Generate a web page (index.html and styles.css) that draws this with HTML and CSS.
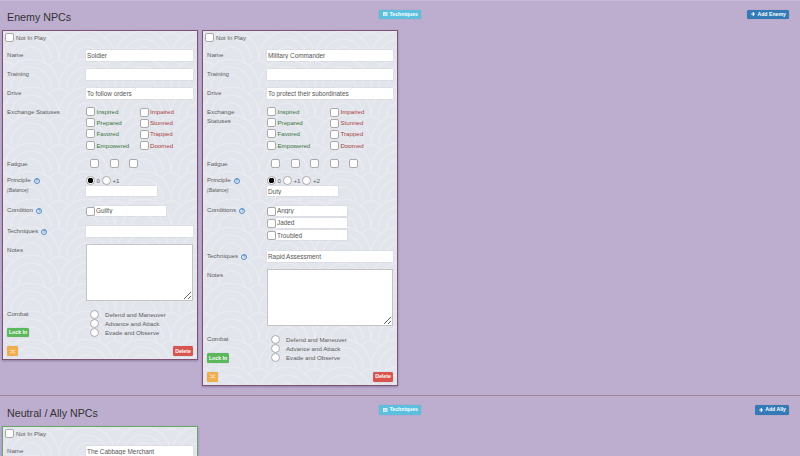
FILE: index.html
```html
<!DOCTYPE html>
<html lang="en">
<head>
<meta charset="utf-8">
<title>NPCs</title>
<link rel="stylesheet" href="styles.css">
</head>
<body>
<section class="band band-enemy">
  <header class="band-head">
    <h2 class="title">Enemy NPCs</h2>
    <a class="btn btn-info"><svg class="ico" viewBox="0 0 10 8"><path fill="#fff" d="M0 0h10v8H0z"/><path stroke="#5bc0de" stroke-width=".7" d="M0 2.5h10M0 5.2h10M3.3 2.5V8M6.7 2.5V8"/></svg>Techniques</a>
    <a class="btn btn-primary btn-right"><svg class="ico" viewBox="0 0 8 8"><path fill="#fff" d="M3 0h2v3h3v2H5v3H3V5H0V3h3z"/></svg>Add Enemy</a>
  </header>
  <div class="cards">
    <article class="card card-enemy">
      <label class="row-check"><input class="cb" type="checkbox">Not In Play</label>
      <div class="row"><span class="lab">Name</span><input class="txt" value="Soldier"></div>
      <div class="row"><span class="lab">Training</span><input class="txt"></div>
      <div class="row"><span class="lab">Drive</span><input class="txt" value="To follow orders"></div>
      <div class="row row-status"><span class="lab">Exchange Statuses</span>
        <div class="statuses">
          <label class="good"><input class="cb" type="checkbox">Inspired</label><label class="bad"><input class="cb" type="checkbox">Impaired</label>
          <label class="good"><input class="cb" type="checkbox">Prepared</label><label class="bad"><input class="cb" type="checkbox">Stunned</label>
          <label class="good"><input class="cb" type="checkbox">Favored</label><label class="bad"><input class="cb" type="checkbox">Trapped</label>
          <label class="good"><input class="cb" type="checkbox">Empowered</label><label class="bad"><input class="cb" type="checkbox">Doomed</label>
        </div>
      </div>
      <div class="row row-fatigue"><span class="lab">Fatigue</span>
        <div class="fatigue"><input class="cb" type="checkbox"><input class="cb" type="checkbox"><input class="cb" type="checkbox"></div>
      </div>
      <div class="row row-principle"><div class="lab">Principle <span class="help">?</span><small class="sub">(Balance)</small></div>
        <div>
          <div class="radios"><input class="rb" type="radio" name="p1" checked><span>0</span><input class="rb" type="radio" name="p1"><span>+1</span></div>
          <input class="txt txt-short">
        </div>
      </div>
      <div class="row row-cond"><span class="lab">Condition <span class="help">?</span></span>
        <div class="conds"><div class="cond"><input class="cb" type="checkbox"><input class="txt txt-short" value="Guilty"></div></div>
      </div>
      <div class="row"><span class="lab">Techniques <span class="help">?</span></span><input class="txt" value=""></div>
      <div class="row row-notes"><span class="lab">Notes</span><textarea class="notes"></textarea></div>
      <div class="row row-combat"><div class="lab">Combat<a class="btn btn-success btn-lock">Lock In</a></div>
        <div class="combat">
          <label><input class="rb" type="radio" name="c1">Defend and Maneuver</label>
          <label><input class="rb" type="radio" name="c1">Advance and Attack</label>
          <label><input class="rb" type="radio" name="c1">Evade and Observe</label>
        </div>
      </div>
      <footer class="foot"><a class="btn btn-warn"><svg class="ico-x" viewBox="0 0 10 8"><path fill="none" stroke="#fff" d="M0 1.5h2.5l4 5H9M0 6.5h2.5l4-5H9"/></svg></a><a class="btn btn-danger">Delete</a></footer>
    </article>

    <article class="card card-enemy card-narrow">
      <label class="row-check"><input class="cb" type="checkbox">Not In Play</label>
      <div class="row"><span class="lab">Name</span><input class="txt" value="Military Commander"></div>
      <div class="row"><span class="lab">Training</span><input class="txt"></div>
      <div class="row"><span class="lab">Drive</span><input class="txt" value="To protect their subordinates"></div>
      <div class="row row-status"><span class="lab lab-status">Exchange Statuses</span>
        <div class="statuses">
          <label class="good"><input class="cb" type="checkbox">Inspired</label><label class="bad"><input class="cb" type="checkbox">Impaired</label>
          <label class="good"><input class="cb" type="checkbox">Prepared</label><label class="bad"><input class="cb" type="checkbox">Stunned</label>
          <label class="good"><input class="cb" type="checkbox">Favored</label><label class="bad"><input class="cb" type="checkbox">Trapped</label>
          <label class="good"><input class="cb" type="checkbox">Empowered</label><label class="bad"><input class="cb" type="checkbox">Doomed</label>
        </div>
      </div>
      <div class="row row-fatigue"><span class="lab">Fatigue</span>
        <div class="fatigue"><input class="cb" type="checkbox"><input class="cb" type="checkbox"><input class="cb" type="checkbox"><input class="cb" type="checkbox"><input class="cb" type="checkbox"></div>
      </div>
      <div class="row row-principle"><div class="lab">Principle <span class="help">?</span><small class="sub">(Balance)</small></div>
        <div>
          <div class="radios"><input class="rb" type="radio" name="p2" checked><span>0</span><input class="rb" type="radio" name="p2"><span>+1</span><input class="rb" type="radio" name="p2"><span>+2</span></div>
          <input class="txt txt-short" value="Duty">
        </div>
      </div>
      <div class="row row-cond"><span class="lab">Conditions <span class="help">?</span></span>
        <div class="conds">
          <div class="cond"><input class="cb" type="checkbox"><input class="txt txt-short" value="Angry"></div>
          <div class="cond"><input class="cb" type="checkbox"><input class="txt txt-short" value="Jaded"></div>
          <div class="cond"><input class="cb" type="checkbox"><input class="txt txt-short" value="Troubled"></div>
        </div>
      </div>
      <div class="row"><span class="lab">Techniques <span class="help">?</span></span><input class="txt" value="Rapid Assessment"></div>
      <div class="row row-notes"><span class="lab">Notes</span><textarea class="notes"></textarea></div>
      <div class="row row-combat"><div class="lab">Combat<a class="btn btn-success btn-lock">Lock In</a></div>
        <div class="combat">
          <label><input class="rb" type="radio" name="c2">Defend and Maneuver</label>
          <label><input class="rb" type="radio" name="c2">Advance and Attack</label>
          <label><input class="rb" type="radio" name="c2">Evade and Observe</label>
        </div>
      </div>
      <footer class="foot"><a class="btn btn-warn"><svg class="ico-x" viewBox="0 0 10 8"><path fill="none" stroke="#fff" d="M0 1.5h2.5l4 5H9M0 6.5h2.5l4-5H9"/></svg></a><a class="btn btn-danger">Delete</a></footer>
    </article>
  </div>
</section>

<section class="band band-ally">
  <header class="band-head">
    <h2 class="title">Neutral / Ally NPCs</h2>
    <a class="btn btn-info"><svg class="ico" viewBox="0 0 10 8"><path fill="#fff" d="M0 0h10v8H0z"/><path stroke="#5bc0de" stroke-width=".7" d="M0 2.5h10M0 5.2h10M3.3 2.5V8M6.7 2.5V8"/></svg>Techniques</a>
    <a class="btn btn-primary btn-right"><svg class="ico" viewBox="0 0 8 8"><path fill="#fff" d="M3 0h2v3h3v2H5v3H3V5H0V3h3z"/></svg>Add Ally</a>
  </header>
  <div class="cards">
    <article class="card card-ally">
      <label class="row-check"><input class="cb" type="checkbox">Not In Play</label>
      <div class="row"><span class="lab">Name</span><input class="txt" value="The Cabbage Merchant"></div>
    </article>
  </div>
</section>
</body>
</html>
```
FILE: styles.css
```css
* { box-sizing: border-box; }
html, body { height: 456px; overflow: hidden; }
body {
  margin: 0;
  background: #bdaed0;
  box-shadow: inset 0 1px #c6b9d6;
  font-family: "Liberation Sans", Arial, sans-serif;
  font-size: 6.15px;
  line-height: 9px;
  color: #5c5c5c;
}
.band-enemy { height: 396px; border-bottom: 1px solid #a0839f; }
.band-head {
  display: grid;
  grid-template-columns: 1fr auto 1fr;
  align-items: start;
  height: 30px;
  padding: 9.5px 7px 0;
}
.band-ally .band-head { padding-top: 9px; }
.title {
  margin: 0;
  font-size: 10.7px;
  line-height: 14px;
  font-weight: 400;
  color: #333;
}
.band-enemy .title { margin-top: 0.5px; }
.band-ally .title { margin-top: 1px; }
.btn {
  display: inline-flex;
  align-items: center;
  justify-content: center;
  height: 9.5px;
  padding: 0 3px;
  border-radius: 1.5px;
  color: #fff;
  font-size: 5.2px;
  font-weight: 700;
  line-height: 9px;
  box-shadow: 0 0 1px rgba(60, 60, 80, .35);
}
.btn-right { justify-self: end; margin-right: 4px; }
.ico { width: 4.5px; height: 4px; margin: 0 2px 0 1px; }
.ico-x { width: 6px; height: 5px; }
.btn-info { background: #5bc0de; }
.btn-primary { background: #337ab7; }
.btn-success { background: #5cb85c; }
.btn-warn { background: #f0ad4e; width: 11px; height: 10px; padding: 0; }
.btn-danger { background: #d9534f; height: 10px; width: 20px; padding: 0; }

.cards { display: flex; align-items: flex-start; gap: 4px; padding-left: 2px; }
.card {
  --lab: 79px;
  width: 196px;
  padding: 1px 4px 3px 4px;
  border: 1px solid #7f5273;
  box-shadow: 0 1px 2px rgba(60, 40, 80, .35);
  background-color: #e2e5ec;
  background-image: url("data:image/svg+xml,%3Csvg xmlns='http://www.w3.org/2000/svg' xmlns:xlink='http://www.w3.org/1999/xlink' width='56' height='28'%3E%3Cdefs%3E%3Cg id='c' fill='%23e2e5ec' stroke='%23e9ebf0' stroke-width='1.6'%3E%3Ccircle r='28'/%3E%3Ccircle r='20' fill='none'/%3E%3Ccircle r='12' fill='none'/%3E%3C/g%3E%3C/defs%3E%3Cuse xlink:href='%23c' x='28' y='0'/%3E%3Cuse xlink:href='%23c' x='0' y='14'/%3E%3Cuse xlink:href='%23c' x='56' y='14'/%3E%3Cuse xlink:href='%23c' x='28' y='28'/%3E%3C/svg%3E");
}
.card-narrow { --lab: 60px; }
.card-ally { border-color: #6aa56a; height: 60px; }

.row-check {
  display: flex;
  align-items: center;
  gap: 2px;
  height: 10px;
  margin: 0 0 8px -2px;
}
.row {
  display: grid;
  grid-template-columns: var(--lab) 1fr;
  margin-bottom: 8px;
}
.lab { display: block; line-height: 9px; }
.lab-status { padding-right: 12px; }
.sub { display: block; font-size: 5px; font-style: italic; margin-top: 1.5px; }
.help {
  display: inline-block;
  width: 6px;
  height: 6px;
  margin-left: 1.5px;
  border: 1px solid #4f8fcf;
  border-radius: 50%;
  color: #337ab7;
  font-size: 4px;
  font-weight: 700;
  line-height: 4px;
  text-align: center;
}

.txt {
  display: block;
  width: 100%;
  height: 11px;
  padding: 0 1px;
  border: 0;
  border-radius: 0;
  background: #fff;
  box-shadow: 0 0 1px rgba(120, 120, 130, .4);
  font: 6.4px/9px "Liberation Sans", Arial, sans-serif;
  color: #555;
  outline: 0;
}
.txt-short { width: 71px; height: 10px; }

.cb, .rb {
  appearance: none;
  flex: none;
  display: inline-block;
  width: 9px;
  height: 9px;
  margin: 0;
  background: #fff;
  border: 1px solid #aaa;
  border-radius: 2px;
}
.rb { border-radius: 50%; }
.rb:checked { background: radial-gradient(circle, #000 0 2.5px, #fff 3px); }

.row-status { margin-bottom: 9px; }
.statuses { display: grid; grid-template-columns: 1fr 1fr; row-gap: 1.2px; margin-top: -0.5px; }
.statuses label { display: flex; align-items: center; gap: 1.5px; height: 10px; }
.statuses .bad .cb { margin-top: 1px; }
.good { color: #3c763d; }
.bad { color: #a94442; }

.row-fatigue { margin-bottom: 7px; }
.fatigue { display: flex; gap: 10.5px; padding-left: 4px; }

.row-principle { margin-bottom: 9.5px; }
.radios { display: flex; align-items: center; gap: 1.5px; height: 10px; margin-bottom: 1px; }
.radios span { margin-right: 0.5px; }

.row-cond { margin-bottom: 10px; }
.row-cond .lab { margin-top: -1px; }
.card-narrow .row-cond { margin-bottom: 11px; }
.conds { display: flex; flex-direction: column; gap: 2.4px; }
.cond { display: flex; align-items: center; }
.cond .cb { margin-top: 1px; }

.row-notes { margin-top: -1px; }
.row-notes .lab { margin-top: 1px; }
.notes {
  display: block;
  width: 100%;
  height: 57px;
  padding: 2px;
  background: #fff;
  border: 1px solid #c4c4c4;
  border-radius: 0;
  outline: 0;
}

.row-combat { margin-bottom: 9px; }
.btn-lock { display: flex; width: 22px; margin-top: 10px; height: 9.5px; padding: 0; }
.combat { display: flex; flex-direction: column; padding: 1px 0 0 4px; }
.combat label { display: flex; align-items: center; gap: 6px; height: 9px; }
.foot { display: flex; justify-content: space-between; }
```
